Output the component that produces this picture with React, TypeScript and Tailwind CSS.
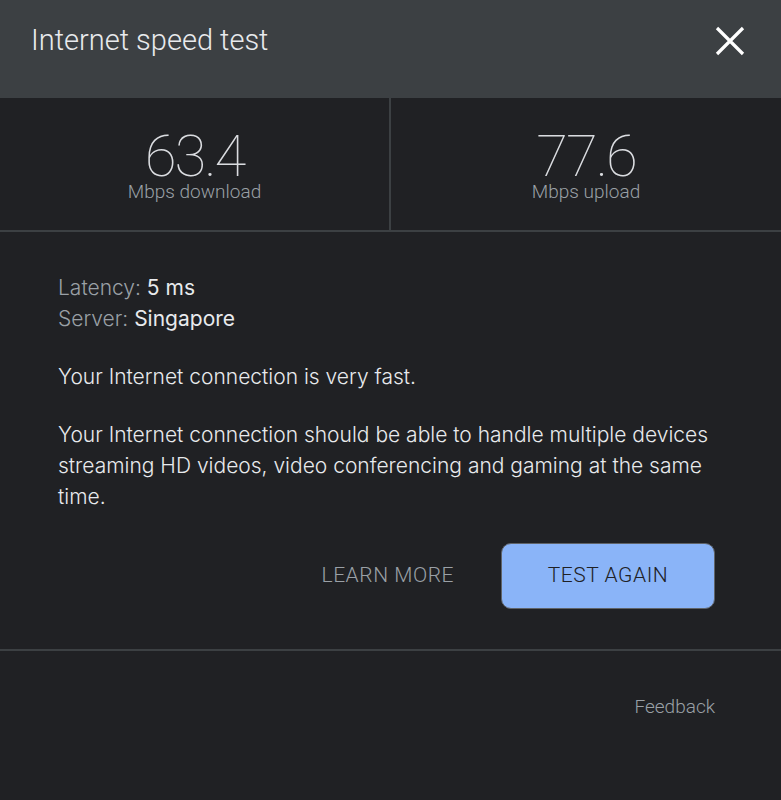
export default function App() {
  return (
    <div
      className="w-[781px] h-[800px] bg-[#202124] text-[#e8eaed] flex flex-col"
      style={{ fontFamily: 'Roboto, "Noto Sans", sans-serif' }}
    >
      {/* header */}
      <div className="h-[98px] bg-[#3c4043] flex items-start justify-between pl-[31px] pr-[36px] pt-[20px]">
        <h1 className="text-[29px] font-light leading-[40px] text-[#e8eaed]">Internet speed test</h1>
        <button className="mt-[6px] text-white">
          <svg width="30" height="30" viewBox="0 0 30 30">
            <path d="M2 2 L28 28 M28 2 L2 28" stroke="currentColor" strokeWidth="3.2" />
          </svg>
        </button>
      </div>

      {/* results */}
      <div className="grid grid-cols-[391px_1fr] h-[134px] border-b-2 border-[#3c4043]">
        <div className="flex flex-col items-center pt-[32px] border-r-2 border-[#3c4043]">
          <div className="text-[58px] font-thin leading-[52px] tracking-[-2px] text-[#dadce0]">63.4</div>
          <div className="text-[19px] font-light leading-[20px] text-[#9aa0a6]">Mbps download</div>
        </div>
        <div className="flex flex-col items-center pt-[32px]">
          <div className="text-[58px] font-thin leading-[52px] tracking-[-2px] text-[#dadce0]">77.6</div>
          <div className="text-[19px] font-light leading-[20px] text-[#9aa0a6]">Mbps upload</div>
        </div>
      </div>

      {/* details */}
      <div
        className="px-[58px] pt-[40px] text-[21px] font-light leading-[31px]"
        style={{ fontFamily: 'Inter, Roboto, sans-serif' }}
      >
        <div>
          <span className="text-[#9aa0a6]">Latency:</span> <span className="font-normal">5 ms</span>
        </div>
        <div>
          <span className="text-[#9aa0a6]">Server:</span> <span className="font-normal">Singapore</span>
        </div>
        <p className="mt-[27px]">Your Internet connection is very fast.</p>
        <p className="mt-[27px]">
          Your Internet connection should be able to handle multiple devices streaming HD videos, video conferencing and gaming at the same time.
        </p>
      </div>

      <div className="flex justify-end items-center gap-[47px] pr-[66px] mt-[31px] pb-[40px] border-b-2 border-[#3c4043]">
        <button className="text-[21px] font-light text-[#9aa0a6] tracking-wide">LEARN MORE</button>
        <button className="w-[214px] h-[66px] rounded-[10px] bg-[#8ab4f8] border border-[#5f6368] text-[21px] font-light text-[#202124] tracking-wide">
          TEST AGAIN
        </button>
      </div>

      <div className="flex justify-end pr-[66px] pt-[42px]">
        <button className="text-[19px] font-light text-[#9aa0a6]">Feedback</button>
      </div>
    </div>
  );
}
